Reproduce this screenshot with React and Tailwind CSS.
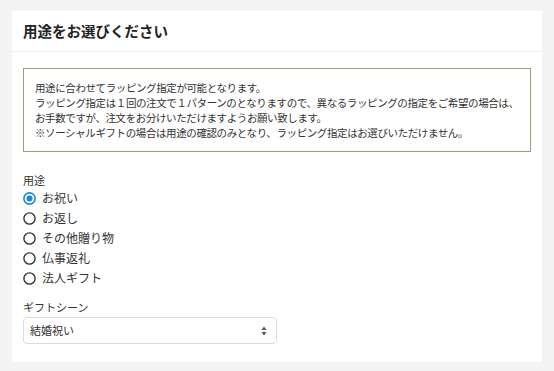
import React, { useState } from 'react';

const options = ['お祝い', 'お返し', 'その他贈り物', '仏事返礼', '法人ギフト'];

const Radio = ({ checked }) => (
  <svg width="13" height="13" viewBox="0 0 13 13" className="shrink-0">
    {checked ? (
      <>
        <circle cx="6.5" cy="6.5" r="5.6" fill="white" stroke="#1b87d8" strokeWidth="1.6" />
        <circle cx="6.5" cy="6.5" r="3" fill="#1b87d8" />
      </>
    ) : (
      <circle cx="6.5" cy="6.5" r="5.6" fill="white" stroke="#333" strokeWidth="1.4" />
    )}
  </svg>
);

const App = () => {
  const [use, setUse] = useState('お祝い');

  return (
    <div
      className="min-h-screen bg-[#f4f4f4] pt-[11px] px-[12px] text-[#333]"
      style={{ fontFamily: '"Noto Sans CJK JP", "Noto Sans", sans-serif' }}
    >
      <div className="bg-white w-[530px] pb-[18px]">
        <div className="h-[41px] flex items-center px-[11px] border-b border-[#f0f0f0]">
          <h2 className="text-[14.5px] font-bold text-[#222]">用途をお選びください</h2>
        </div>

        <div className="px-[11px]">
          <div className="mt-[16px] border border-[#a59a80] px-[11px] py-[11px] text-[10.5px] tracking-[-0.4px] leading-[15px] text-[#333] whitespace-nowrap">
            <p>用途に合わせてラッピング指定が可能となります。</p>
            <p>ラッピング指定は１回の注文で１パターンのとなりますので、異なるラッピングの指定をご希望の場合は、</p>
            <p>お手数ですが、注文をお分けいただけますようお願い致します。</p>
            <p>※ソーシャルギフトの場合は用途の確認のみとなり、ラッピング指定はお選びいただけません。</p>
          </div>

          <div className="mt-[21px] text-[11px] leading-[15px]">用途</div>
          <div className="flex flex-col">
            {options.map((o) => (
              <label key={o} className="h-5 flex items-center gap-[6px] cursor-pointer" onClick={() => setUse(o)}>
                <Radio checked={use === o} />
                <span className="text-[12px]">{o}</span>
              </label>
            ))}
          </div>

          <div className="mt-3 text-[11px] leading-[15px]">ギフトシーン</div>
          <div className="mt-[2px] w-[254px] h-[27px] border border-[#dcdcdc] rounded-[4px] flex items-center justify-between pl-[6px] pr-[9px]">
            <span className="text-[11px]">結婚祝い</span>
            <svg width="6" height="10" viewBox="0 0 6 10">
              <path d="M3 0.5 L5.5 4 H0.5 Z" fill="#555" />
              <path d="M3 9.5 L5.5 6 H0.5 Z" fill="#555" />
            </svg>
          </div>
        </div>
      </div>
    </div>
  );
};

export default App;
